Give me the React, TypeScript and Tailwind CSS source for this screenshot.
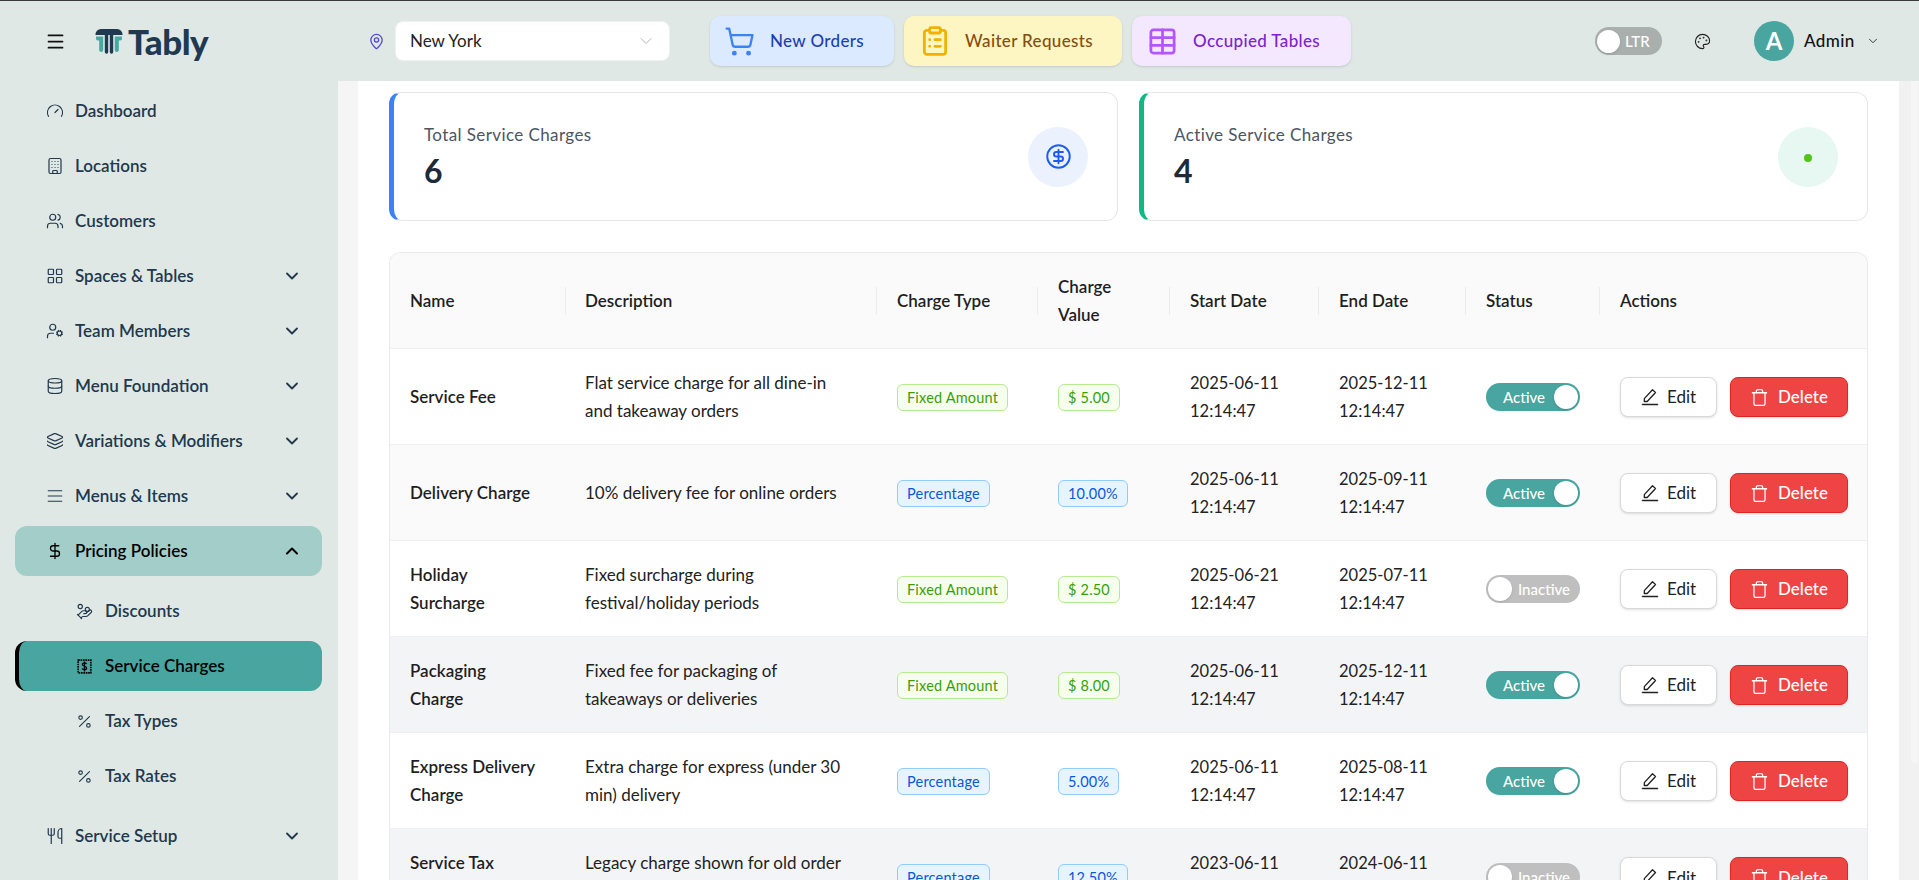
import {
  AlignJustify,
  Building,
  ChevronDown,
  ChevronUp,
  CircleDollarSign,
  ClipboardList,
  Database,
  DollarSign,
  Gauge,
  HandCoins,
  Layers,
  LayoutGrid,
  MapPin,
  Menu,
  Palette,
  Percent,
  ShoppingCart,
  Table,
  Trash,
  UserCog,
  Users,
  Utensils,
} from "lucide-react";
import type { ReactNode } from "react";

const ReceiptDollar = () => (
  <svg width="17" height="17" viewBox="0 0 24 24" fill="none" stroke="currentColor" strokeWidth="2.2">
    <path d="M3 3h18v18H3z" strokeDasharray="2.4 1" />
    <path d="M15 8.500c-.5-1-1.600-1.500-3-1.500-1.700 0-3 .8-3 2.300 0 3 6 1.700 6 4.700 0 1.500-1.300 2.500-3 2.500-1.500 0-2.700-.6-3.200-1.700M12 5v14" strokeWidth="1.800" />
  </svg>
);

const EditIcon = () => (
  <svg width="18" height="18" viewBox="0 0 18 18" fill="none" stroke="currentColor" strokeWidth="1.300" strokeLinejoin="round">
    <path d="M11.500 1.800l3 2.700-8.300 9H3.300v-2.900z" />
    <path d="M1.500 16.500h15" strokeLinecap="round" strokeWidth="1.500" />
  </svg>
);

const navTop = [
  { label: "Dashboard", icon: <Gauge size={18} strokeWidth={1.6} /> },
  { label: "Locations", icon: <Building size={18} strokeWidth={1.6} /> },
  { label: "Customers", icon: <Users size={18} strokeWidth={1.6} /> },
  { label: "Spaces & Tables", icon: <LayoutGrid size={18} strokeWidth={1.6} />, more: true },
  { label: "Team Members", icon: <UserCog size={18} strokeWidth={1.6} />, more: true },
  { label: "Menu Foundation", icon: <Database size={18} strokeWidth={1.6} />, more: true },
  { label: "Variations & Modifiers", icon: <Layers size={18} strokeWidth={1.6} />, more: true },
  { label: "Menus & Items", icon: <AlignJustify size={18} strokeWidth={1.6} />, more: true },
];

const rows = [
  { name: "Service Fee", desc: "Flat service charge for all dine-in\nand takeaway orders", fixed: true, value: "$ 5.00", start: "2025-06-11", end: "2025-12-11", active: true, bg: "bg-white" },
  { name: "Delivery Charge", desc: "10% delivery fee for online orders", fixed: false, value: "10.00%", start: "2025-06-11", end: "2025-09-11", active: true, bg: "bg-[#fafafa]" },
  { name: "Holiday\nSurcharge", desc: "Fixed surcharge during\nfestival/holiday periods", fixed: true, value: "$ 2.50", start: "2025-06-21", end: "2025-07-11", active: false, bg: "bg-white" },
  { name: "Packaging\nCharge", desc: "Fixed fee for packaging of\ntakeaways or deliveries", fixed: true, value: "$ 8.00", start: "2025-06-11", end: "2025-12-11", active: true, bg: "bg-[#f3f4f6]" },
  { name: "Express Delivery\nCharge", desc: "Extra charge for express (under 30\nmin) delivery", fixed: false, value: "5.00%", start: "2025-06-11", end: "2025-08-11", active: true, bg: "bg-white" },
  { name: "Service Tax\n(Old)", desc: "Legacy charge shown for old order\nrecords", fixed: false, value: "12.50%", start: "2023-06-11", end: "2024-06-11", active: false, bg: "bg-[#f3f4f6]" },
];

const headers = [
  { label: "Name", w: "w-[175px] pl-[20px]" },
  { label: "Description", w: "w-[311px] pl-[20px]" },
  { label: "Charge Type", w: "w-[161px] pl-[21px]" },
  { label: "Charge\nValue", w: "w-[132px] pl-[21px]" },
  { label: "Start Date", w: "w-[149px] pl-[21px]" },
  { label: "End Date", w: "w-[147px] pl-[21px]" },
  { label: "Status", w: "w-[134px] pl-[21px]" },
  { label: "Actions", w: "w-[268px] pl-[21px]" },
];

const NavItem = ({ icon, label, more }: { icon: ReactNode; label: string; more?: boolean }) => (
  <div className="flex h-[55px] items-center pl-[46px] pr-[36px] text-[#22384d]">
    <span className="flex w-[29px] shrink-0">{icon}</span>
    <span className="flex-1 text-[17px] font-semibold">{label}</span>
    {more && <ChevronDown size={20} strokeWidth={2.2} />}
  </div>
);

const SubItem = ({ icon, label }: { icon: ReactNode; label: string }) => (
  <div className="flex h-[55px] items-center pl-[76px] text-[#22384d]">
    <span className="flex w-[29px] shrink-0">{icon}</span>
    <span className="text-[17px] font-semibold">{label}</span>
  </div>
);

const Sidebar = () => (
  <aside className="w-[338px] shrink-0 overflow-hidden bg-[#dfe8e4] pt-[2px]">
    {navTop.map((n) => (
      <NavItem key={n.label} icon={n.icon} label={n.label} more={n.more} />
    ))}
    <div className="ml-[15px] mr-[16px] mt-[3px] flex h-[50px] items-center rounded-xl bg-[#a3cdc9] pl-[31px] pr-[20px] text-black">
      <span className="flex w-[29px] shrink-0">
        <DollarSign size={18} strokeWidth={1.8} />
      </span>
      <span className="flex-1 text-[17px] font-semibold">Pricing Policies</span>
      <ChevronUp size={20} strokeWidth={2.4} />
    </div>
    <div className="pt-[7.500px]">
      <SubItem icon={<HandCoins size={17} strokeWidth={1.6} />} label="Discounts" />
      <div className="my-[2.500px] ml-[15px] mr-[16px] flex h-[50px] items-center rounded-xl border-l-4 border-black bg-[#48a5a0] pl-[57px] text-black">
        <span className="flex w-[29px] shrink-0">
          <ReceiptDollar />
        </span>
        <span className="text-[17px] font-semibold">Service Charges</span>
      </div>
      <SubItem icon={<Percent size={17} strokeWidth={1.6} />} label="Tax Types" />
      <SubItem icon={<Percent size={17} strokeWidth={1.6} />} label="Tax Rates" />
    </div>
    <div className="pt-[5px]">
      <NavItem icon={<Utensils size={18} strokeWidth={1.6} />} label="Service Setup" more />
    </div>
  </aside>
);

const Header = () => (
  <header className="flex h-[81px] shrink-0 items-center border-t border-[#3a3a3a] bg-[#dfe8e4]">
    <div className="flex w-[370px] shrink-0 items-center pl-[45px]">
      <Menu size={21} strokeWidth={2} className="text-[#111]" />
      <div className="ml-[29px] flex items-center gap-[5px]">
        <svg width="28" height="26" viewBox="0 0 28 26">
          <path d="M.5 7a5.500 5.500 0 0 1 5.500-6h16a5.500 5.500 0 0 1 5.500 6H.5z" fill="#1f3a50" />
          <path d="M9.800 6h3.400v18a1.700 1.700 0 0 1-3.400 0zM14.800 6h3.400v18a1.700 1.700 0 0 1-3.400 0z" fill="#1f3a50" />
          <path d="M1 8.500h7.200V22a2 2 0 0 1-4 0V12.500H2.800A1.800 1.800 0 0 1 1 10.700zM27 8.500h-7.200V22a2 2 0 0 0 4 0V12.500h1.400a1.800 1.800 0 0 0 1.800-1.800z" fill="#4aa8a2" />
        </svg>
        <span className="text-[35px] font-black leading-none tracking-[-0.5px] text-[#1f3a50]">Tably</span>
      </div>
    </div>
    <MapPin size={17} strokeWidth={1.8} className="-ml-[2px] mr-[10px] text-[#5746c8]" />
    <div className="flex h-[40px] w-[275px] items-center justify-between rounded-lg border border-[#eef1f0] bg-white pl-[14px] pr-[13px] text-[17px] text-[#222]">
      New York
      <ChevronDown size={20} strokeWidth={1.2} className="text-[#b5b5b5]" />
    </div>
    <div className="ml-[40px] flex gap-[10px]">
      <div className="flex h-[50px] w-[184px] items-center rounded-[10px] bg-[#dbeafe] pl-[14px] text-[#1e40af] shadow-sm">
        <ShoppingCart size={31} strokeWidth={1.8} className="text-[#3b82f6]" />
        <span className="ml-[15px] text-[17px] font-medium tracking-[0.35px]">New Orders</span>
      </div>
      <div className="flex h-[50px] w-[218px] items-center rounded-[10px] bg-[#fef6c2] pl-[15px] text-[#854d0e] shadow-sm">
        <ClipboardList size={32} strokeWidth={2.1} className="text-[#f0b100]" />
        <span className="ml-[14px] text-[17px] font-medium tracking-[0.35px]">Waiter Requests</span>
      </div>
      <div className="flex h-[50px] w-[219px] items-center rounded-[10px] bg-[#f3e8ff] pl-[15px] text-[#7e22ce] shadow-sm">
        <Table size={31} strokeWidth={2.1} className="text-[#b455ff]" />
        <span className="ml-[15px] text-[17px] font-medium tracking-[0.35px]">Occupied Tables</span>
      </div>
    </div>
    <div className="ml-[244px] flex h-[28px] w-[67px] items-center rounded-full bg-[#a9afac] pl-[2px]">
      <span className="mr-[5px] h-[23px] w-[23px] rounded-full bg-white shadow" />
      <span className="text-[15px] font-medium text-white">LTR</span>
    </div>
    <Palette size={17} strokeWidth={1.6} className="ml-[32px] text-[#222]" />
    <div className="ml-[43px] flex h-[40px] w-[40px] items-center justify-center rounded-full bg-[#48a5a0] text-[24px] font-bold text-white">
      A
    </div>
    <span className="ml-[10px] text-[17px] font-medium tracking-[0.4px] text-[#111]">Admin</span>
    <ChevronDown size={14} strokeWidth={1.5} className="ml-[11px] text-[#222]" />
  </header>
);

const StatCard = ({ label, value, accent, circle, children }: { label: string; value: number; accent: string; circle: string; children: ReactNode }) => (
  <div className={`flex h-[129px] flex-1 items-center justify-between rounded-xl border border-l-[5px] border-[#e5e7eb] bg-white pl-[30px] pr-[29px] ${accent}`}>
    <div className="pt-[2px]">
      <div className="text-[17px] leading-[24px] tracking-[0.4px] text-[#4b5563]">{label}</div>
      <div className="mt-[3px] text-[32px] font-bold leading-[42px] text-[#1f2937]">{value}</div>
    </div>
    <div className={`flex h-[60px] w-[60px] items-center justify-center rounded-full ${circle}`}>{children}</div>
  </div>
);

const Tag = ({ blue, children }: { blue: boolean; children: ReactNode }) => (
  <span
    className={`inline-block h-[27px] rounded-md border px-[9px] text-[14.500px] leading-[25px] tracking-[0.2px] ${
      blue ? "border-[#91caff] bg-[#e6f4ff] text-[#0958d9]" : "border-[#b7eb8f] bg-[#f6ffed] text-[#389e0d]"
    }`}
  >
    {children}
  </span>
);

const Switch = ({ on }: { on: boolean }) => (
  <span
    className={`flex h-[28px] w-[94px] items-center rounded-full px-[2px] text-[15px] font-medium text-white ${
      on ? "justify-between bg-[#48a5a0] pl-[17px]" : "flex-row-reverse justify-between bg-[#bfbfbf] pr-[10px]"
    }`}
  >
    {on ? "Active" : "Inactive"}
    <span className="h-[24px] w-[24px] rounded-full bg-white shadow" />
  </span>
);

const Row = ({ r }: { r: (typeof rows)[number] }) => (
  <tr className={`border-t border-[#f0f0f0] ${r.bg}`}>
    <td className="h-[96px] whitespace-pre-line pl-[20px] pr-[10px] pt-[2px] align-middle font-semibold leading-[28px] text-[#1f1f1f]">{r.name}</td>
    <td className="whitespace-pre-line pl-[20px] pr-[10px] pt-[2px] align-middle leading-[28px] text-[#222]">{r.desc}</td>
    <td className="pl-[21px] pt-[2px] align-middle">
      <Tag blue={!r.fixed}>{r.fixed ? "Fixed Amount" : "Percentage"}</Tag>
    </td>
    <td className="pl-[21px] pt-[2px] align-middle">
      <Tag blue={!r.fixed}>{r.value}</Tag>
    </td>
    <td className="pl-[21px] pt-[2px] align-middle text-[16.500px] leading-[28px] text-[#222]">
      {r.start}
      <br />
      12:14:47
    </td>
    <td className="pl-[21px] pt-[2px] align-middle text-[16.500px] leading-[28px] text-[#222]">
      {r.end}
      <br />
      12:14:47
    </td>
    <td className="pl-[21px] pt-[2px] align-middle">
      <Switch on={r.active} />
    </td>
    <td className="pl-[21px] pt-[2px] align-middle">
      <div className="flex gap-[13px]">
        <button className="flex h-[40px] w-[97px] items-center justify-center gap-[8px] rounded-lg border border-[#d9d9d9] bg-white text-[17px] text-[#222] shadow-sm">
          <EditIcon />
          Edit
        </button>
        <button className="flex h-[40px] w-[118px] items-center justify-center gap-[9px] rounded-lg border border-[#dc2626] bg-[#ef4444] text-[17px] font-medium text-white shadow-sm">
          <Trash size={19} strokeWidth={1.6} />
          Delete
        </button>
      </div>
    </td>
  </tr>
);

const ChargesTable = () => (
  <div className="mt-[31px] overflow-hidden rounded-t-xl border border-b-0 border-[#e9eaec]">
    <table className="w-full table-fixed border-collapse text-[17px]">
      <thead>
        <tr className="bg-[#fafafa]">
          {headers.map((h, i) => (
            <th key={h.label} className={`relative h-[95px] whitespace-pre-line pr-[10px] pt-[2px] text-left align-middle font-semibold leading-[28px] text-[#1f1f1f] ${h.w}`}>
              {h.label}
              {i > 0 && <span className="absolute left-0 top-[34px] h-[28px] w-px bg-[#ececec]" />}
            </th>
          ))}
        </tr>
      </thead>
      <tbody>
        {rows.map((r) => (
          <Row key={r.name} r={r} />
        ))}
      </tbody>
    </table>
  </div>
);

const App = () => (
  <div className="flex h-[880px] flex-col overflow-hidden bg-white font-['Lato',sans-serif]">
    <Header />
    <div className="flex min-h-0 flex-1">
      <Sidebar />
      <div className="w-[20px] shrink-0 bg-[#f5f5f5]" />
      <main className="min-w-0 flex-1 overflow-hidden bg-white px-[31px] pt-[11px]">
        <div className="flex gap-[21px]">
          <StatCard label="Total Service Charges" value={6} accent="border-l-[#3b82f6]" circle="bg-[#ebf2fd]">
            <CircleDollarSign size={27} strokeWidth={1.7} className="text-[#1d5cf0]" />
          </StatCard>
          <StatCard label="Active Service Charges" value={4} accent="border-l-[#10b981]" circle="bg-[#e7f7f1]">
            <span className="mt-[3px] h-[8px] w-[8px] rounded-full bg-[#52c41a]" />
          </StatCard>
        </div>
        <ChargesTable />
      </main>
      <div className="flex w-[20px] shrink-0 justify-end bg-[#f1f1f1] pr-[1px]">
        <div className="h-[682px] w-[7px] rounded-b bg-[#f6f6f6]" />
      </div>
    </div>
  </div>
);

export default App;
